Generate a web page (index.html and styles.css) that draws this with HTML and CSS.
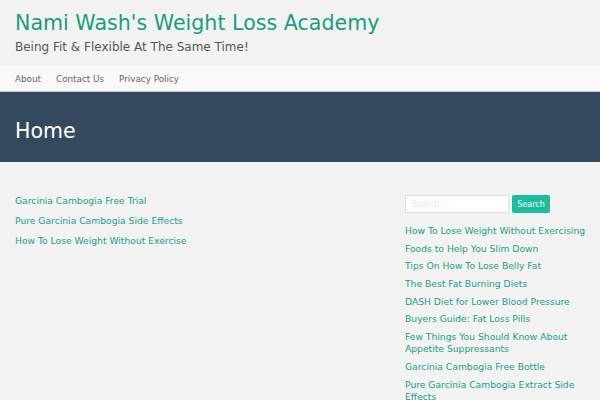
FILE: index.html
```html
<!DOCTYPE html>
<html>
<head>
<meta charset="utf-8">
<link rel="stylesheet" href="styles.css">
</head>
<body>
<header class="site-header">
  <h1 class="site-title">Nami Wash's Weight Loss Academy</h1>
  <p class="site-desc">Being Fit &amp; Flexible At The Same Time!</p>
</header>
<nav class="main-nav">
  <a href="#">About</a>
  <a href="#">Contact Us</a>
  <a href="#">Privacy Policy</a>
</nav>
<div class="page-header">
  <h2>Home</h2>
</div>
<div class="content">
  <main class="main">
    <a href="#">Garcinia Cambogia Free Trial</a>
    <a href="#">Pure Garcinia Cambogia Side Effects</a>
    <a href="#">How To Lose Weight Without Exercise</a>
  </main>
  <aside class="sidebar">
    <form class="search">
      <input type="text" placeholder="Search …">
      <button type="button">Search</button>
    </form>
    <ul class="recent">
      <li><a href="#">How To Lose Weight Without Exercising</a></li>
      <li><a href="#">Foods to Help You Slim Down</a></li>
      <li><a href="#">Tips On How To Lose Belly Fat</a></li>
      <li><a href="#">The Best Fat Burning Diets</a></li>
      <li><a href="#">DASH Diet for Lower Blood Pressure</a></li>
      <li><a href="#">Buyers Guide: Fat Loss Pills</a></li>
      <li><a href="#">Few Things You Should Know About Appetite Suppressants</a></li>
      <li><a href="#">Garcinia Cambogia Free Bottle</a></li>
      <li><a href="#">Pure Garcinia Cambogia Extract Side Effects</a></li>
    </ul>
  </aside>
</div>
</body>
</html>
```
FILE: styles.css
```css
html, body { margin: 0; padding: 0; }
body {
  background: #f2f2f2;
  font-family: "DejaVu Sans", sans-serif;
  overflow: hidden;
}
a { text-decoration: none; }
.site-header { padding: 10px 15px 0; height: 56px; box-sizing: border-box; }
.site-title {
  margin: 0;
  font-size: 20.6px;
  font-weight: normal;
  color: #1a9c80;
  line-height: 27px;
}
.site-desc {
  margin: 2px 0 0;
  font-size: 12px;
  color: #555;
  line-height: 16px;
}
.main-nav {
  margin-top: 10px;
  background: #f9f9f9;
  height: 25px;
  display: flex;
  align-items: center;
  padding: 0 15px;
  gap: 15px;
  border-bottom: 1px solid #c8c8c8;
}
.main-nav a { color: #666; font-size: 8.8px; }
.page-header {
  background: #34495e;
  height: 70px;
  box-sizing: border-box;
  padding: 8px 15px 0;
  display: flex;
  align-items: center;
}
.page-header h2 {
  margin: 0;
  color: #fff;
  font-weight: normal;
  font-size: 20.5px;
}
.content {
  display: flex;
  padding: 33px 5px 0 15px;
}
.main {
  flex: 0 0 390px;
  display: flex;
  flex-direction: column;
  gap: 8px;
}
.main a, .recent a {
  color: #19a086;
  font-size: 9.2px;
  line-height: 12px;
}
.sidebar { flex: 1; }
.search { display: flex; gap: 3px; margin: 0; }
.search input {
  width: 104px;
  height: 18px;
  box-sizing: border-box;
  border: 1px solid #ddd;
  background: #fff;
  font-size: 8px;
  padding: 0 6px;
  font-family: "DejaVu Sans", sans-serif;
}
.search input::placeholder { color: #e6e6e6; }
.search button {
  width: 38px;
  height: 18px;
  border: none;
  border-radius: 2px;
  background: #1abc9c;
  color: #fff;
  font-size: 8px;
  padding: 0;
  font-family: "DejaVu Sans", sans-serif;
}
.recent {
  list-style: none;
  margin: 12px 0 0;
  padding: 0;
  display: flex;
  flex-direction: column;
  gap: 5.7px;
}
.recent li { line-height: 12px; }
.recent a { display: block; }
```
